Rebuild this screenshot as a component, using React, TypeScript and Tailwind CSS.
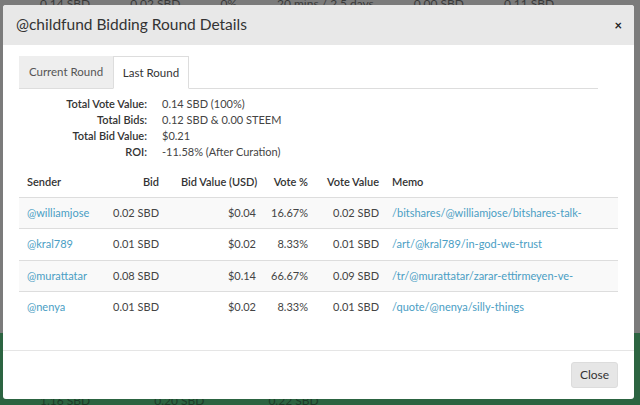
import React from 'react';

type Bid = {
    sender: string;
    bid: string;
    value: string;
    pct: string;
    vote: string;
    memo: string;
};

const bids: Bid[] = [
    { sender: '@williamjose', bid: '0.02 SBD', value: '$0.04', pct: '16.67%', vote: '0.02 SBD', memo: '/bitshares/@williamjose/bitshares-talk-' },
    { sender: '@kral789', bid: '0.01 SBD', value: '$0.02', pct: '8.33%', vote: '0.01 SBD', memo: '/art/@kral789/in-god-we-trust' },
    { sender: '@murattatar', bid: '0.08 SBD', value: '$0.14', pct: '66.67%', vote: '0.09 SBD', memo: '/tr/@murattatar/zarar-ettirmeyen-ve-' },
    { sender: '@nenya', bid: '0.01 SBD', value: '$0.02', pct: '8.33%', vote: '0.01 SBD', memo: '/quote/@nenya/silly-things' },
];

const summary: [string, string][] = [
    ['Total Vote Value:', '0.14 SBD (100%)'],
    ['Total Bids:', '0.12 SBD & 0.00 STEEM'],
    ['Total Bid Value:', '$0.21'],
    ['ROI:', '-11.58% (After Curation)'],
];

const App: React.FC = () => {
    return (
        <div className="relative w-[640px] h-[405px] overflow-hidden font-['Lato','Open_Sans',sans-serif]">

            {/* Page behind the dialog, already dimmed */}
            <div className="flex flex-col h-full text-[12px] text-[#3a3a3a]">
                <div className="flex gap-10 h-[333px] bg-[#7b7b7b] pl-[40px] leading-[8px]">
                    <span>0.14 SBD</span>
                    <span>0.02 SBD</span>
                    <span>0%</span>
                    <span>20 mins / 2.5 days</span>
                    <span>0.00 SBD</span>
                    <span>0.11 SBD</span>
                </div>
                <div className="flex-1 bg-[#2c6441] flex items-end gap-16 pl-[40px] text-[#1d3b28] leading-[8px]">
                    <span>1.16 SBD</span>
                    <span>0.20 SBD</span>
                    <span>0.22 SBD</span>
                </div>
            </div>

            {/* Dialog */}
            <div className="absolute left-[3px] top-[5px] w-[631px] h-[394px] bg-white rounded-[3px] flex flex-col text-[#444]">

                {/* Header */}
                <div className="h-[40px] bg-[#e8e8e8] rounded-t-[3px] flex items-center justify-between pl-[13px] pr-[12px]">
                    <h4 className="text-[15.5px] text-[#333]">@childfund Bidding Round Details</h4>
                    <span className="text-[13px] font-bold text-[#222] leading-none">×</span>
                </div>

                {/* Body */}
                <div className="flex-1 px-[16px] pt-[11px]">

                    {/* Tabs */}
                    <div className="flex border-b border-[#ddd] mr-[20px] h-[33px]">
                        <div className="w-[94px] bg-[#eeeeee] flex items-center justify-center text-[11.5px] text-[#555]">Current Round</div>
                        <div className="w-[76px] bg-white border border-[#ddd] border-b-white -mb-px flex items-center justify-center text-[11.5px] text-[#333]">Last Round</div>
                    </div>

                    {/* Summary */}
                    <div className="grid grid-cols-[128px_1fr] gap-x-[15px] mt-[7px] text-[11px] leading-[16px]">
                        {summary.map(([label, value]) => (
                            <React.Fragment key={label}>
                                <span className="text-right font-semibold text-[#333]">{label}</span>
                                <span>{value}</span>
                            </React.Fragment>
                        ))}
                    </div>

                    {/* Bids table */}
                    <table className="mt-[7px] w-[599px] table-fixed text-[11px] border-collapse whitespace-nowrap">
                        <colgroup>
                            <col className="w-[86px]" />
                            <col className="w-[62px]" />
                            <col className="w-[97px]" />
                            <col className="w-[52px]" />
                            <col className="w-[71px]" />
                            <col />
                        </colgroup>
                        <thead>
                            <tr className="h-[30px] border-b border-[#ddd] text-[#333]">
                                <th className="text-left font-semibold pl-[8px]">Sender</th>
                                <th className="text-right font-semibold pr-[8px]">Bid</th>
                                <th className="text-left font-semibold pl-[14px]">Bid Value (USD)</th>
                                <th className="text-right font-semibold pr-[8px]">Vote %</th>
                                <th className="text-right font-semibold pr-[8px]">Vote Value</th>
                                <th className="text-left font-semibold pl-[5px]">Memo</th>
                            </tr>
                        </thead>
                        <tbody>
                            {bids.map((b, i) => (
                                <tr key={b.sender} className={`h-[31.5px] ${i % 2 === 0 ? 'bg-[#f9f9f9]' : 'bg-white'} ${i < bids.length - 1 ? 'border-b border-[#ddd]' : ''}`}>
                                    <td className="pl-[8px] text-[#4a9ec4]">{b.sender}</td>
                                    <td className="text-right pr-[8px]">{b.bid}</td>
                                    <td className="text-right pr-[8px]">{b.value}</td>
                                    <td className="text-right pr-[8px]">{b.pct}</td>
                                    <td className="text-right pr-[8px]">{b.vote}</td>
                                    <td className="pl-[5px] text-[#4a9ec4] overflow-hidden">{b.memo}</td>
                                </tr>
                            ))}
                        </tbody>
                    </table>
                </div>

                {/* Footer */}
                <div className="h-[49px] border-t border-[#e5e5e5] flex items-center justify-end pr-[16px]">
                    <button className="h-[26px] w-[47px] bg-[#e6e6e6] border border-[#dcdcdc] rounded-[3px] text-[12px] text-[#333]">Close</button>
                </div>
            </div>
        </div>
    );
};

export default App;
